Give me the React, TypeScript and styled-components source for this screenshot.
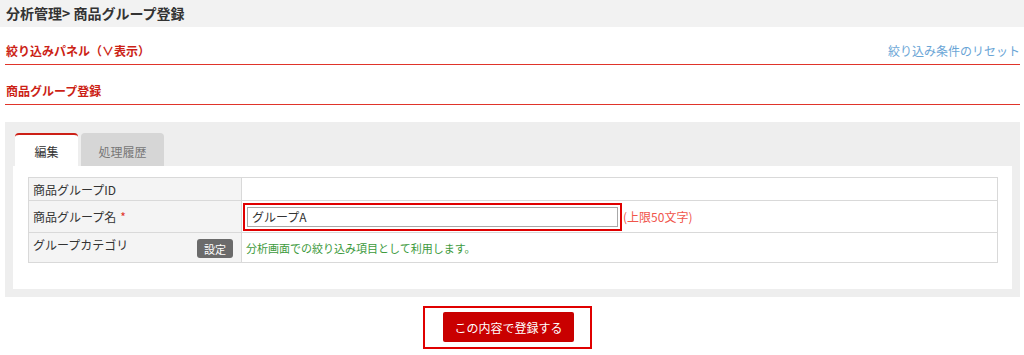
import React from 'react';
import styled, { createGlobalStyle } from 'styled-components';

const GlobalStyle = createGlobalStyle`
  body {
    margin: 0;
    background: #fff;
    font-family: "Noto Sans CJK JP", "Noto Sans", sans-serif;
    color: #333;
  }
`;

const PageHeader = styled.div`
  height: 27px;
  line-height: 27px;
  background: #f2f2f2;
  padding-left: 6px;
  font-size: 14px;
  font-weight: bold;
  color: #333;
`;

const Section = styled.div<{ h: number }>`
  display: flex;
  align-items: flex-end;
  justify-content: space-between;
  height: ${p => p.h}px;
  margin: 0 4px 0 5px;
  padding: 0 0 5px 1px;
  box-sizing: border-box;
  border-bottom: 1px solid #e0342a;
`;

const SectionTitle = styled.div`
  font-size: 12px;
  font-weight: bold;
  color: #cc1f16;
`;

const ResetLink = styled.a`
  font-size: 12px;
  color: #6aa5d6;
  text-decoration: none;
  cursor: pointer;
`;

const Panel = styled.div`
  margin: 17px 4px 0 5px;
  background: #eeeeee;
  padding: 11px 8px 8px 8px;
`;

const Tabs = styled.div`
  display: flex;
  gap: 3px;
  padding-left: 2px;
`;

const Tab = styled.div<{ active?: boolean }>`
  width: ${p => (p.active ? 63 : 83)}px;
  height: 33px;
  box-sizing: border-box;
  display: flex;
  align-items: center;
  justify-content: center;
  font-size: 12px;
  border-radius: 4px 4px 0 0;
  background: ${p => (p.active ? '#fff' : '#d6d6d6')};
  border-top: ${p => (p.active ? '2px solid #cc1f16' : 'none')};
  color: ${p => (p.active ? '#333' : '#777')};
  padding-top: ${p => (p.active ? 2 : 4)}px;
`;

const TabBody = styled.div`
  background: #fff;
  padding: 11px 14px 26px 15px;
`;

const Table = styled.table`
  width: 100%;
  border-collapse: collapse;
  font-size: 12px;
`;

const Row = styled.tr<{ h: number }>`
  height: ${p => p.h}px;
`;

const Label = styled.th<{ middle?: boolean }>`
  width: 208px;
  background: #f4f4f4;
  border: 1px solid #d9d9d9;
  text-align: left;
  font-weight: normal;
  color: #333;
  padding: ${p => (p.middle ? '0' : '3px')} 0 0 4px;
  vertical-align: ${p => (p.middle ? 'middle' : 'top')};
`;

const LabelInner = styled.div`
  display: flex;
  justify-content: space-between;
  align-items: flex-start;
  padding-right: 8px;
`;

const Required = styled.span`
  color: #e0342a;
  margin-left: 4px;
`;

const Cell = styled.td`
  border: 1px solid #d9d9d9;
  padding: 0 0 0 1px;
  vertical-align: middle;
`;

const InputWrap = styled.div`
  display: flex;
  align-items: center;
`;

const InputFrame = styled.div`
  border: 2px solid #e00000;
  padding: 2px;
  width: 379px;
  box-sizing: border-box;
`;

const TextInput = styled.input`
  display: block;
  width: 100%;
  height: 20px;
  box-sizing: border-box;
  border: 1px solid #a9a9a9;
  font-family: inherit;
  font-size: 12px;
  color: #333;
  padding: 0 4px;
  outline: none;
`;

const LimitNote = styled.span`
  font-size: 12px;
  color: #f0554b;
  margin-left: 1px;
`;

const SettingButton = styled.button`
  width: 36px;
  height: 19px;
  padding: 0;
  margin-top: 3px;
  border: none;
  border-radius: 3px;
  background: #6b6b6b;
  color: #fff;
  font-family: inherit;
  font-size: 11px;
`;

const Hint = styled.span`
  color: #3c9a3c;
  font-size: 11px;
  padding-left: 3px;
`;

const Footer = styled.div`
  display: flex;
  justify-content: center;
  padding: 9px 9px 0 0;
`;

const SubmitFrame = styled.div`
  border: 2px solid #e00000;
  padding: 4px 16px 5px 18px;
`;

const SubmitButton = styled.button`
  width: 131px;
  height: 30px;
  border: none;
  border-radius: 2px;
  background: #c90000;
  color: #fff;
  font-family: inherit;
  font-size: 12px;
`;

export default function App() {
  return (
    <>
      <GlobalStyle />
      <PageHeader>分析管理&gt; 商品グループ登録</PageHeader>
      <Section h={38}>
        <SectionTitle>絞り込みパネル（∨表示）</SectionTitle>
        <ResetLink>絞り込み条件のリセット</ResetLink>
      </Section>
      <Section h={40}>
        <SectionTitle>商品グループ登録</SectionTitle>
      </Section>
      <Panel>
        <Tabs>
          <Tab active>編集</Tab>
          <Tab>処理履歴</Tab>
        </Tabs>
        <TabBody>
          <Table>
            <tbody>
              <Row h={23}>
                <Label middle>商品グループID</Label>
                <Cell />
              </Row>
              <Row h={32}>
                <Label middle>
                  商品グループ名<Required>*</Required>
                </Label>
                <Cell>
                  <InputWrap>
                    <InputFrame>
                      <TextInput defaultValue="グループA" />
                    </InputFrame>
                    <LimitNote>(上限50文字)</LimitNote>
                  </InputWrap>
                </Cell>
              </Row>
              <Row h={30}>
                <Label>
                  <LabelInner>
                    グループカテゴリ
                    <SettingButton>設定</SettingButton>
                  </LabelInner>
                </Label>
                <Cell>
                  <Hint>分析画面での絞り込み項目として利用します。</Hint>
                </Cell>
              </Row>
            </tbody>
          </Table>
        </TabBody>
      </Panel>
      <Footer>
        <SubmitFrame>
          <SubmitButton>この内容で登録する</SubmitButton>
        </SubmitFrame>
      </Footer>
    </>
  );
}
